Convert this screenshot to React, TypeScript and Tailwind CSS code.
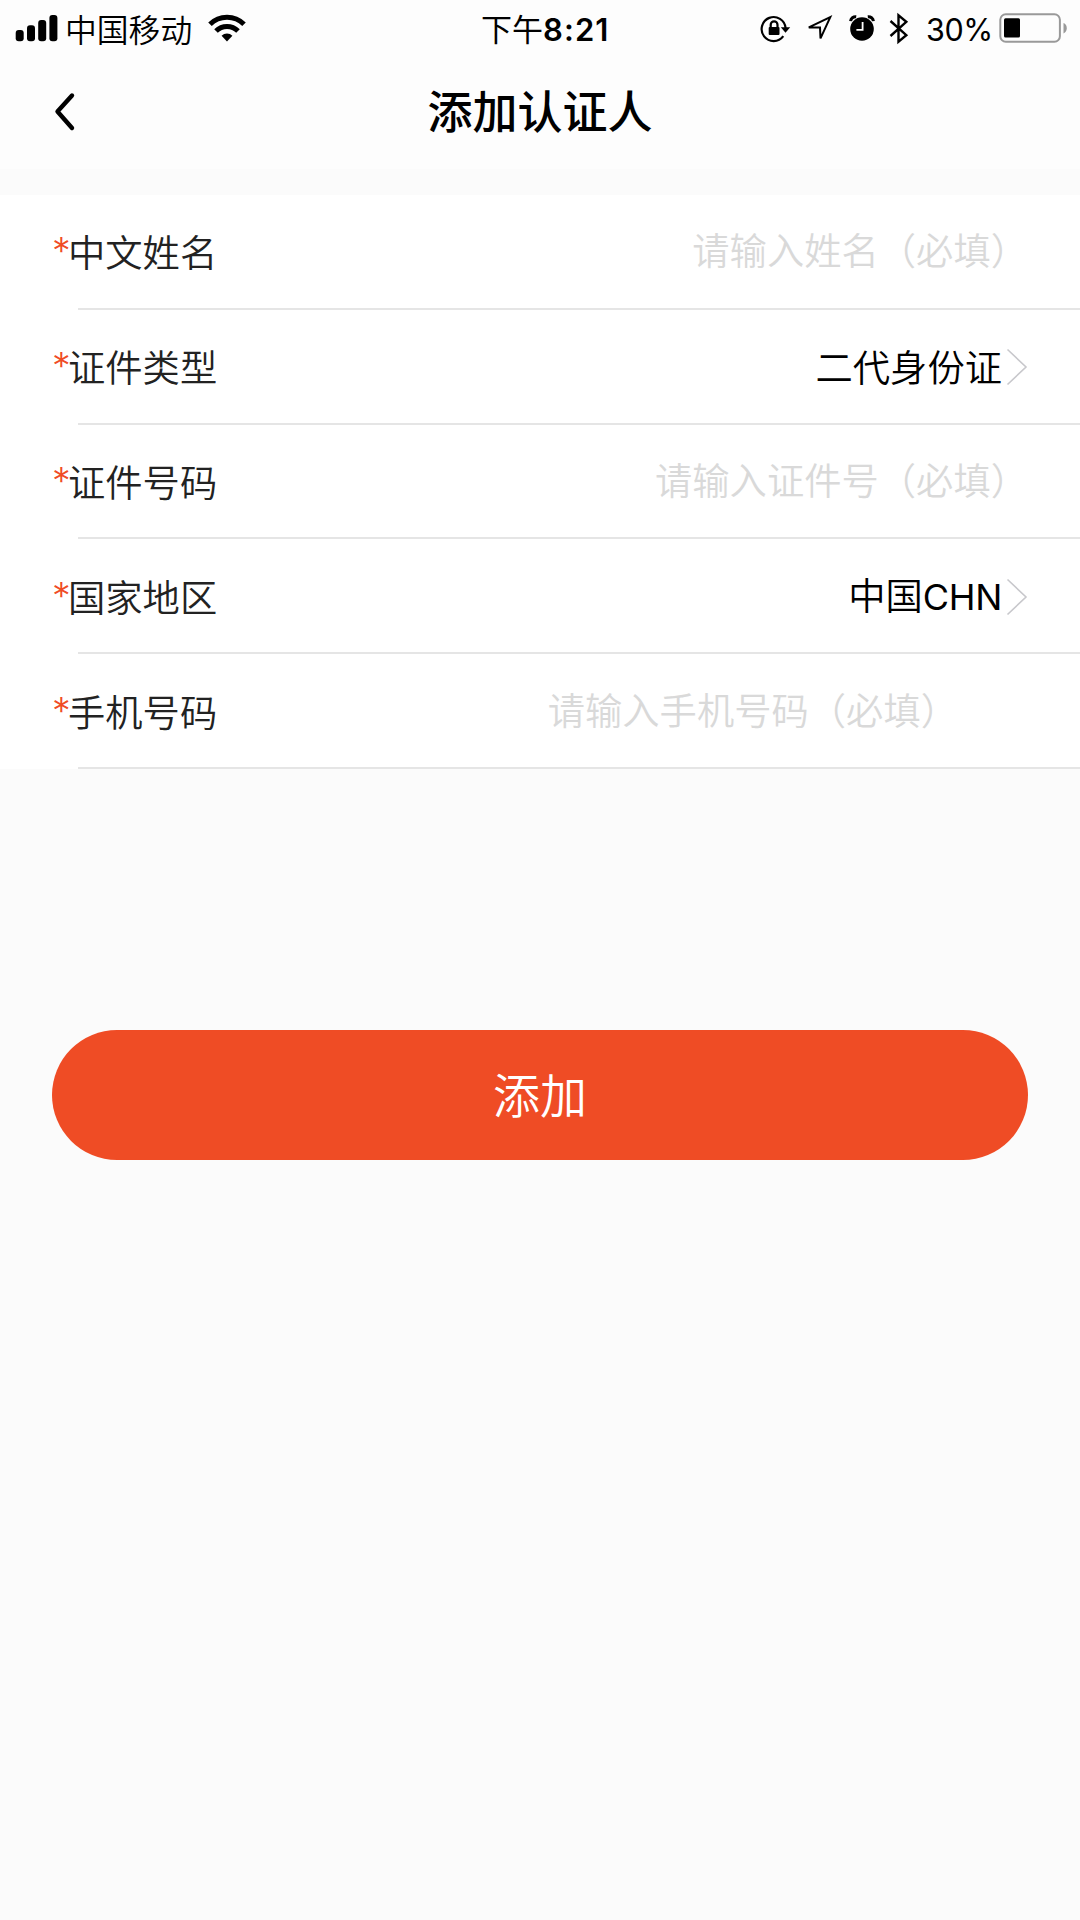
import React from "react";

type Field = {
    label: string;
    value?: string;
    suffix?: string;
    placeholder?: string;
    wide?: boolean;
};

const fields: Field[] = [
    { label: "中文姓名", placeholder: "请输入姓名（必填）" },
    { label: "证件类型", value: "二代身份证" },
    { label: "证件号码", placeholder: "请输入证件号（必填）" },
    { label: "国家地区", value: "中国", suffix: "CHN" },
    { label: "手机号码", placeholder: "请输入手机号码（必填）", wide: true },
];

function StatusBar() {
    return (
        <div className="flex h-[57px] items-center text-black">
            {/* LEFT: signal, carrier, wifi */}
            <div className="flex flex-1 items-center pl-[15px]">
                <svg width="43" height="57" viewBox="0 0 43 57" fill="currentColor">
                    <rect x="0.7" y="30" width="8" height="11.3" rx="3" />
                    <rect x="12" y="25.3" width="8" height="16" rx="3" />
                    <rect x="23.2" y="20" width="8" height="21.3" rx="3" />
                    <rect x="34.4" y="15" width="8" height="26.3" rx="3" />
                </svg>
                <span className="ml-[7px] text-[31.8px] font-[350] leading-[55px]">中国移动</span>
                <svg className="ml-[16px]" width="38" height="57" viewBox="0 0 38 57" fill="none" stroke="currentColor" strokeWidth="5">
                    <path d="M2 24.2a24 24 0 0 1 34 0" />
                    <path d="M8 31a15.5 15.5 0 0 1 22 0" />
                    <path d="M19 41.4l-5.4-5.6a7.7 7.7 0 0 1 10.8 0z" fill="currentColor" stroke="none" />
                </svg>
            </div>

            <div className="w-[122px] whitespace-nowrap text-[31px] leading-[55px]">
                下午<span className="font-['Inter',sans-serif] font-semibold tracking-[1.1px]">8:21</span>
            </div>

            {/* RIGHT: lock, location, alarm, bluetooth, battery */}
            <div className="flex flex-1 items-center justify-end pr-[11px]">
                <svg width="32" height="57" viewBox="760 0 32 57" fill="none" stroke="currentColor" strokeWidth="2.2">
                    <path d="M783.3 36.2A12 12 0 1 1 785.6 28" />
                    <path d="M780.8 27.2h9.4l-4.7 5.6z" fill="currentColor" stroke="none" />
                    <rect x="768.7" y="27" width="10.8" height="8" rx="1" fill="currentColor" stroke="none" />
                    <path d="M770.7 27.5v-2.8a3.4 3.4 0 0 1 6.8 0v2.8" />
                </svg>
                <svg className="ml-[14px]" width="28" height="57" viewBox="806 0 28 57" fill="none" stroke="currentColor" strokeWidth="2">
                    <path d="M808.8 27.4L830.3 17.2L820.5 38.4L820 27.6z" />
                </svg>
                <svg className="ml-[14px]" width="28" height="57" viewBox="848 0 28 57">
                    <circle cx="862" cy="29" r="11.8" fill="currentColor" />
                    <path d="M850.6 21.2a5 5 0 0 1 5.6-4.5M867.8 16.7a5 5 0 0 1 5.6 4.5" fill="none" stroke="currentColor" strokeWidth="3" />
                    <path d="M862.6 22v7.8h-6.2" fill="none" stroke="white" strokeWidth="1.8" />
                </svg>
                <svg className="ml-[12px]" width="22" height="57" viewBox="888 0 22 57" fill="none" stroke="currentColor" strokeWidth="2.4">
                    <path d="M890.5 21l15.8 14.2-7.8 6.4V15.4l7.8 6.4-15.8 14.2" />
                </svg>
                <span className="ml-[16px] w-[73px] whitespace-nowrap pt-px font-['Inter',sans-serif] text-[30.5px] leading-[57px] tracking-[-0.4px]">30%</span>
                <svg width="70" height="57" viewBox="999 0 70 57">
                    <rect x="1000.3" y="14.3" width="59.6" height="27.4" rx="5.5" fill="none" stroke="#999999" strokeWidth="2" />
                    <rect x="1004" y="18.3" width="16" height="19.2" rx="1.5" fill="currentColor" />
                    <path d="M1063.5 23c4.4 1.7 4.4 8.7 0 10.4z" fill="#999999" />
                </svg>
            </div>
        </div>
    );
}

function FormRow({ label, value, suffix, placeholder, wide }: Field) {
    return (
        <div className="flex h-[114.8px] flex-col bg-white">
            <div className="flex flex-1 items-center justify-between pl-[52px] pr-[52px] text-[37.3px] leading-[56px]">
                <div className="flex items-center font-[350] text-[#222222]">
                    <span className="w-[16px] font-['Inter',sans-serif] font-light text-[#f04c24]">*</span>
                    <span>{label}</span>
                </div>
                {value ? (
                    <div className="flex items-center text-black">
                        <span className="font-[350]">
                            {value}
                            {suffix && (
                                <span className="font-['Inter',sans-serif] text-[36px] font-normal tracking-[-0.3px]">{suffix}</span>
                            )}
                        </span>
                        <svg className="ml-[4px] mt-[2px]" width="22" height="38" viewBox="0 0 22 38" fill="none" stroke="#c8c8cc" strokeWidth="1.6">
                            <path d="M1.5 1.5l18.5 17.5L1.5 36.5" />
                        </svg>
                    </div>
                ) : (
                    <span className={`pb-[4px] font-[350] text-[#d9d9d9] ${wide ? "mr-[70px]" : ""}`}>
                        {placeholder}
                    </span>
                )}
            </div>
            <div className="ml-[78px] h-[2px] bg-[#e5e5e5]" />
        </div>
    );
}

export default function App() {
    return (
        <div className="min-h-[1920px] w-full bg-[#fbfbfb] font-['Noto_Sans_CJK_SC',sans-serif]">
            <header className="h-[169px] bg-[#fdfdfd]">
                <StatusBar />
                <div className="grid h-[109px] grid-cols-[1fr_auto_1fr] items-center px-[52px]">
                    <svg width="26" height="42" viewBox="0 0 26 42" fill="none" stroke="black" strokeWidth="4.4" strokeLinecap="round" strokeLinejoin="round">
                        <path d="M20 4.5L5.5 20.5L20 37" />
                    </svg>
                    <h1 className="pb-[3px] text-[45px] font-medium leading-[64px] text-black">添加认证人</h1>
                </div>
            </header>

            <section className="mt-[26px]">
                {fields.map((field) => (
                    <FormRow key={field.label} {...field} />
                ))}
            </section>

            <div className="px-[52px] pt-[261px]">
                <button className="h-[130px] w-full rounded-full bg-[#ef4c25] pb-[3px] text-[47px] font-[350] leading-[64px] text-white">
                    添加
                </button>
            </div>
        </div>
    );
}
